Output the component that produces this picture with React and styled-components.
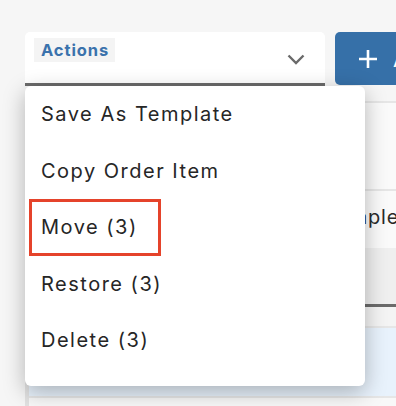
import React from 'react';
import styled, { createGlobalStyle } from 'styled-components';

const GlobalStyle = createGlobalStyle`
  html, body {
    margin: 0;
    padding: 0;
    background: #f6f6f6;
    font-family: Inter, "Noto Sans", sans-serif;
    overflow: hidden;
  }
`;

const Page = styled.div`
  position: relative;
  width: 396px;
  height: 406px;
  padding: 32px 0 0 25px;
  box-sizing: border-box;
  overflow: hidden;
`;

const Toolbar = styled.div`
  display: flex;
  gap: 10px;
  align-items: flex-start;
`;

const SelectBox = styled.div`
  flex: none;
  width: 300px;
  height: 54px;
  box-sizing: border-box;
  background: #fff;
  border-radius: 5px 5px 0 0;
  border-bottom: 3px solid #6b6b6b;
  display: flex;
  justify-content: space-between;
  padding: 6px 20px 0 9px;
`;

const Label = styled.span`
  align-self: flex-start;
  background: #f4f4f4;
  color: #3a72ac;
  font-weight: 700;
  font-size: 16.5px;
  letter-spacing: 0.9px;
  line-height: 24px;
  padding: 0 6px 0 7px;
`;

const Chevron = styled.svg`
  flex: none;
  margin-top: 16px;
`;

const PlusIcon = styled.svg`
  flex: none;
`;

const AddButton = styled.button`
  flex: none;
  width: 110px;
  height: 53px;
  border: none;
  border-radius: 5px;
  background: #3670a8;
  color: #fff;
  font-family: inherit;
  font-size: 22px;
  padding: 0 0 0 23px;
  display: flex;
  align-items: center;
  gap: 15px;
`;

const Table = styled.div`
  margin-top: 15px;
  border-left: 4px solid #e2e2e2;
  background: #fafafa;
`;

const Row = styled.div`
  height: ${p => p.h}px;
  background: ${p => p.bg || '#fafafa'};
  border-top: ${p => p.line || '2px solid #e6e6e6'};
  border-bottom: ${p => p.under || 'none'};
  box-sizing: border-box;
  display: flex;
  align-items: center;
  font-size: 20px;
  letter-spacing: 0.8px;
  color: #2a2a2a;
`;

const HeadCell = styled.span`
  flex: none;
  margin-left: 295px;
  margin-top: -6px;
`;

const Menu = styled.ul`
  position: absolute;
  top: 86px;
  left: 25px;
  width: 340px;
  margin: 0;
  padding: 0 0 17px;
  list-style: none;
  background: #fff;
  border-radius: 6px;
  box-shadow: 0 6px 22px rgba(0, 0, 0, 0.28);
`;

const Item = styled.li`
  height: 56.5px;
  display: flex;
  align-items: stretch;
  padding-left: ${p => (p.marked ? 4 : 16)}px;
  font-size: 20px;
  letter-spacing: 1.5px;
  color: #262626;
`;

const ItemText = styled.span`
  display: flex;
  align-items: center;
  padding: ${p => (p.marked ? '0 20px 0 9px' : '0')};
  border: ${p => (p.marked ? '3px solid #e5432b' : 'none')};
`;

const items = ['Save As Template', 'Copy Order Item', 'Move (3)', 'Restore (3)', 'Delete (3)'];

export default function App() {
  return (
    <Page>
      <GlobalStyle />
      <Toolbar>
        <SelectBox>
          <Label>Actions</Label>
          <Chevron width="18" height="11" viewBox="0 0 18 11">
            <path d="M1.5 1.5 L9 9 L16.5 1.5" fill="none" stroke="#6a6a6a" strokeWidth="2.4" />
          </Chevron>
        </SelectBox>
        <AddButton>
          <PlusIcon width="20" height="20" viewBox="0 0 20 20">
            <path d="M10 1 V19 M1 10 H19" stroke="#fff" strokeWidth="2.6" />
          </PlusIcon>
          <span>Add</span>
        </AddButton>
      </Toolbar>
      <Table>
        <Row h={88} />
        <Row h={59}>
          <HeadCell>Sample</HeadCell>
        </Row>
        <Row h={59} bg="#efefef" line="none" under="3px solid #6b6b6b" />
        <Row h={19} bg="#f4f4f4" line="none" />
        <Row h={70} bg="#e8f2fc" />
        <Row h={20} bg="#f8f8f8" />
      </Table>
      <Menu>
        {items.map(t => (
          <Item key={t} marked={t === 'Move (3)'}>
            <ItemText marked={t === 'Move (3)'}>{t}</ItemText>
          </Item>
        ))}
      </Menu>
    </Page>
  );
}
